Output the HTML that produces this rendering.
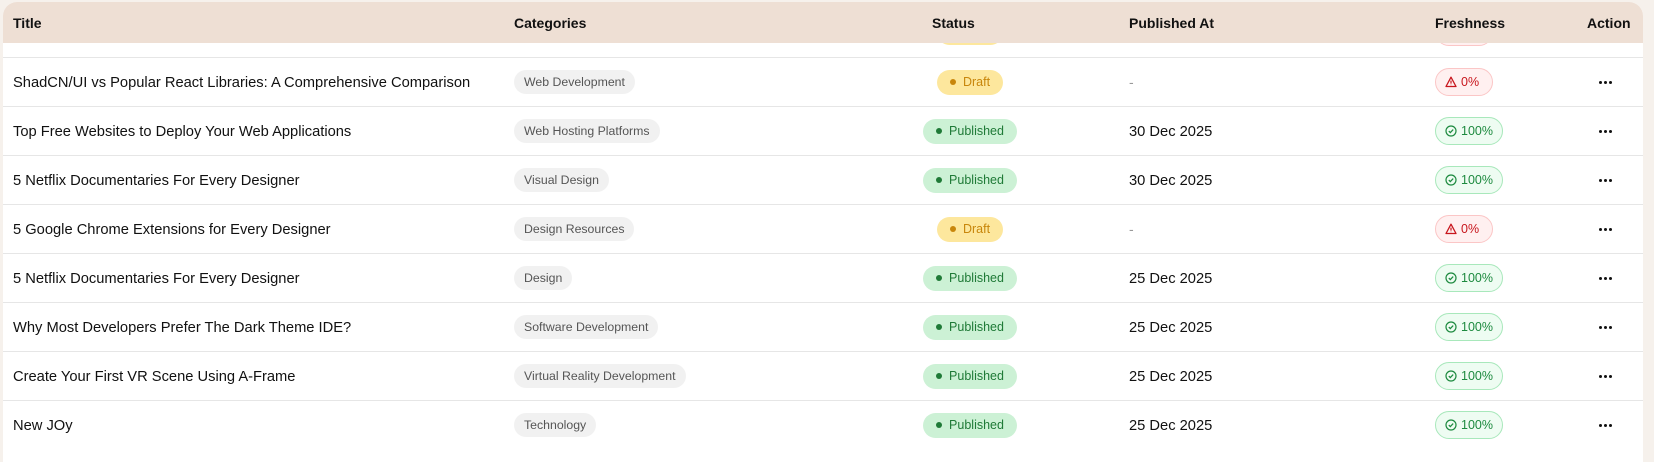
<!DOCTYPE html>
<html><head><style>
*{margin:0;padding:0;box-sizing:border-box}
body{width:1654px;height:440px;background:#f6f1ec;font-family:"Liberation Sans",sans-serif;overflow:hidden;position:relative}
.tbl{position:absolute;left:3px;top:2px;width:1640px;height:460px;background:#fff;border-radius:14px 14px 0 0;overflow:hidden}
.hd{position:absolute;left:0;top:0;width:100%;height:41px;background:#eedfd4;z-index:5;font-size:14px;font-weight:bold;color:#111}
.hd span{position:absolute;top:13px}
.row{position:absolute;left:0;width:100%;height:49px;border-top:1.5px solid #e6e6e6}
.t{position:absolute;left:10px;top:17px;font-size:14.7px;color:#111}
.cat{position:absolute;left:511px;top:12px;height:24px;line-height:24px;padding:0 10px;border-radius:12px;background:#f1f1f1;color:#555;font-size:12.3px}
.st{position:absolute;top:12px;height:25px;line-height:25px;border-radius:13px;font-size:12.5px;text-align:center}
.dr{left:934px;width:66px;background:#fde79d;color:#c8860b}
.pb{left:920px;width:94px;background:#ccf1d5;color:#1f7a37}
.st i{display:inline-block;width:6px;height:6px;border-radius:3px;background:currentColor;margin-right:7px;vertical-align:1px}
.dt{position:absolute;left:1126px;top:17px;font-size:14.7px;color:#111}
.ds{position:absolute;left:1126px;top:16px;font-size:14px;color:#999}
.fr{position:absolute;left:1432px;top:10px;height:28px;line-height:26px;border-radius:14px;font-size:12.5px;padding-left:9px}
.bad{width:58px;background:#fff0f0;border:1px solid #fbc6c6;color:#c8161d}
.ok{width:68px;background:#eefcf2;border:1px solid #a8e8bb;color:#1d8a3f}
.fr svg{vertical-align:-2px;margin-right:4px}
.ac{position:absolute;left:1596px;top:23px;width:20px;height:4px}
.ac b{float:left;width:3px;height:3px;border-radius:2px;background:#111;margin-right:2px}
</style></head><body>
<div class="tbl">
<div class="hd"><span style="left:10px">Title</span><span style="left:511px">Categories</span><span style="left:929px">Status</span><span style="left:1126px">Published At</span><span style="left:1432px">Freshness</span><span style="left:1584px">Action</span></div>
<div class="row" style="top:10px;border:none"><div class="st dr" style="top:8px">x</div><div class="fr bad" style="top:6px"></div></div>

<div class="row" style="top:55px"><div class="t">ShadCN/UI vs Popular React Libraries: A Comprehensive Comparison</div><div class="cat">Web Development</div><div class="st dr"><i></i>Draft</div><div class="ds">-</div><div class="fr bad"><svg width="12" height="12" viewBox="0 0 12 12"><path d="M6 1.2L11 10.5H1z" fill="none" stroke="#c8161d" stroke-width="1.3" stroke-linejoin="round"/><path d="M6 4.6v3M6 8.7v.4" stroke="#c8161d" stroke-width="1.2"/></svg>0%</div><div class="ac"><b></b><b></b><b></b></div></div>

<div class="row" style="top:104px"><div class="t">Top Free Websites to Deploy Your Web Applications</div><div class="cat">Web Hosting Platforms</div><div class="st pb"><i></i>Published</div><div class="dt">30 Dec 2025</div><div class="fr ok"><svg width="12" height="12" viewBox="0 0 12 12"><circle cx="6" cy="6" r="5" fill="none" stroke="#1d8a3f" stroke-width="1.2"/><path d="M3.8 6.1l1.5 1.5 2.9-3" fill="none" stroke="#1d8a3f" stroke-width="1.2"/></svg>100%</div><div class="ac"><b></b><b></b><b></b></div></div>

<div class="row" style="top:153px"><div class="t">5 Netflix Documentaries For Every Designer</div><div class="cat">Visual Design</div><div class="st pb"><i></i>Published</div><div class="dt">30 Dec 2025</div><div class="fr ok"><svg width="12" height="12" viewBox="0 0 12 12"><circle cx="6" cy="6" r="5" fill="none" stroke="#1d8a3f" stroke-width="1.2"/><path d="M3.8 6.1l1.5 1.5 2.9-3" fill="none" stroke="#1d8a3f" stroke-width="1.2"/></svg>100%</div><div class="ac"><b></b><b></b><b></b></div></div>

<div class="row" style="top:202px"><div class="t">5 Google Chrome Extensions for Every Designer</div><div class="cat">Design Resources</div><div class="st dr"><i></i>Draft</div><div class="ds">-</div><div class="fr bad"><svg width="12" height="12" viewBox="0 0 12 12"><path d="M6 1.2L11 10.5H1z" fill="none" stroke="#c8161d" stroke-width="1.3" stroke-linejoin="round"/><path d="M6 4.6v3M6 8.7v.4" stroke="#c8161d" stroke-width="1.2"/></svg>0%</div><div class="ac"><b></b><b></b><b></b></div></div>

<div class="row" style="top:251px"><div class="t">5 Netflix Documentaries For Every Designer</div><div class="cat">Design</div><div class="st pb"><i></i>Published</div><div class="dt">25 Dec 2025</div><div class="fr ok"><svg width="12" height="12" viewBox="0 0 12 12"><circle cx="6" cy="6" r="5" fill="none" stroke="#1d8a3f" stroke-width="1.2"/><path d="M3.8 6.1l1.5 1.5 2.9-3" fill="none" stroke="#1d8a3f" stroke-width="1.2"/></svg>100%</div><div class="ac"><b></b><b></b><b></b></div></div>

<div class="row" style="top:300px"><div class="t">Why Most Developers Prefer The Dark Theme IDE?</div><div class="cat">Software Development</div><div class="st pb"><i></i>Published</div><div class="dt">25 Dec 2025</div><div class="fr ok"><svg width="12" height="12" viewBox="0 0 12 12"><circle cx="6" cy="6" r="5" fill="none" stroke="#1d8a3f" stroke-width="1.2"/><path d="M3.8 6.1l1.5 1.5 2.9-3" fill="none" stroke="#1d8a3f" stroke-width="1.2"/></svg>100%</div><div class="ac"><b></b><b></b><b></b></div></div>

<div class="row" style="top:349px"><div class="t">Create Your First VR Scene Using A-Frame</div><div class="cat">Virtual Reality Development</div><div class="st pb"><i></i>Published</div><div class="dt">25 Dec 2025</div><div class="fr ok"><svg width="12" height="12" viewBox="0 0 12 12"><circle cx="6" cy="6" r="5" fill="none" stroke="#1d8a3f" stroke-width="1.2"/><path d="M3.8 6.1l1.5 1.5 2.9-3" fill="none" stroke="#1d8a3f" stroke-width="1.2"/></svg>100%</div><div class="ac"><b></b><b></b><b></b></div></div>

<div class="row" style="top:398px"><div class="t">New JOy</div><div class="cat">Technology</div><div class="st pb"><i></i>Published</div><div class="dt">25 Dec 2025</div><div class="fr ok"><svg width="12" height="12" viewBox="0 0 12 12"><circle cx="6" cy="6" r="5" fill="none" stroke="#1d8a3f" stroke-width="1.2"/><path d="M3.8 6.1l1.5 1.5 2.9-3" fill="none" stroke="#1d8a3f" stroke-width="1.2"/></svg>100%</div><div class="ac"><b></b><b></b><b></b></div></div>
</div>
</body></html>
